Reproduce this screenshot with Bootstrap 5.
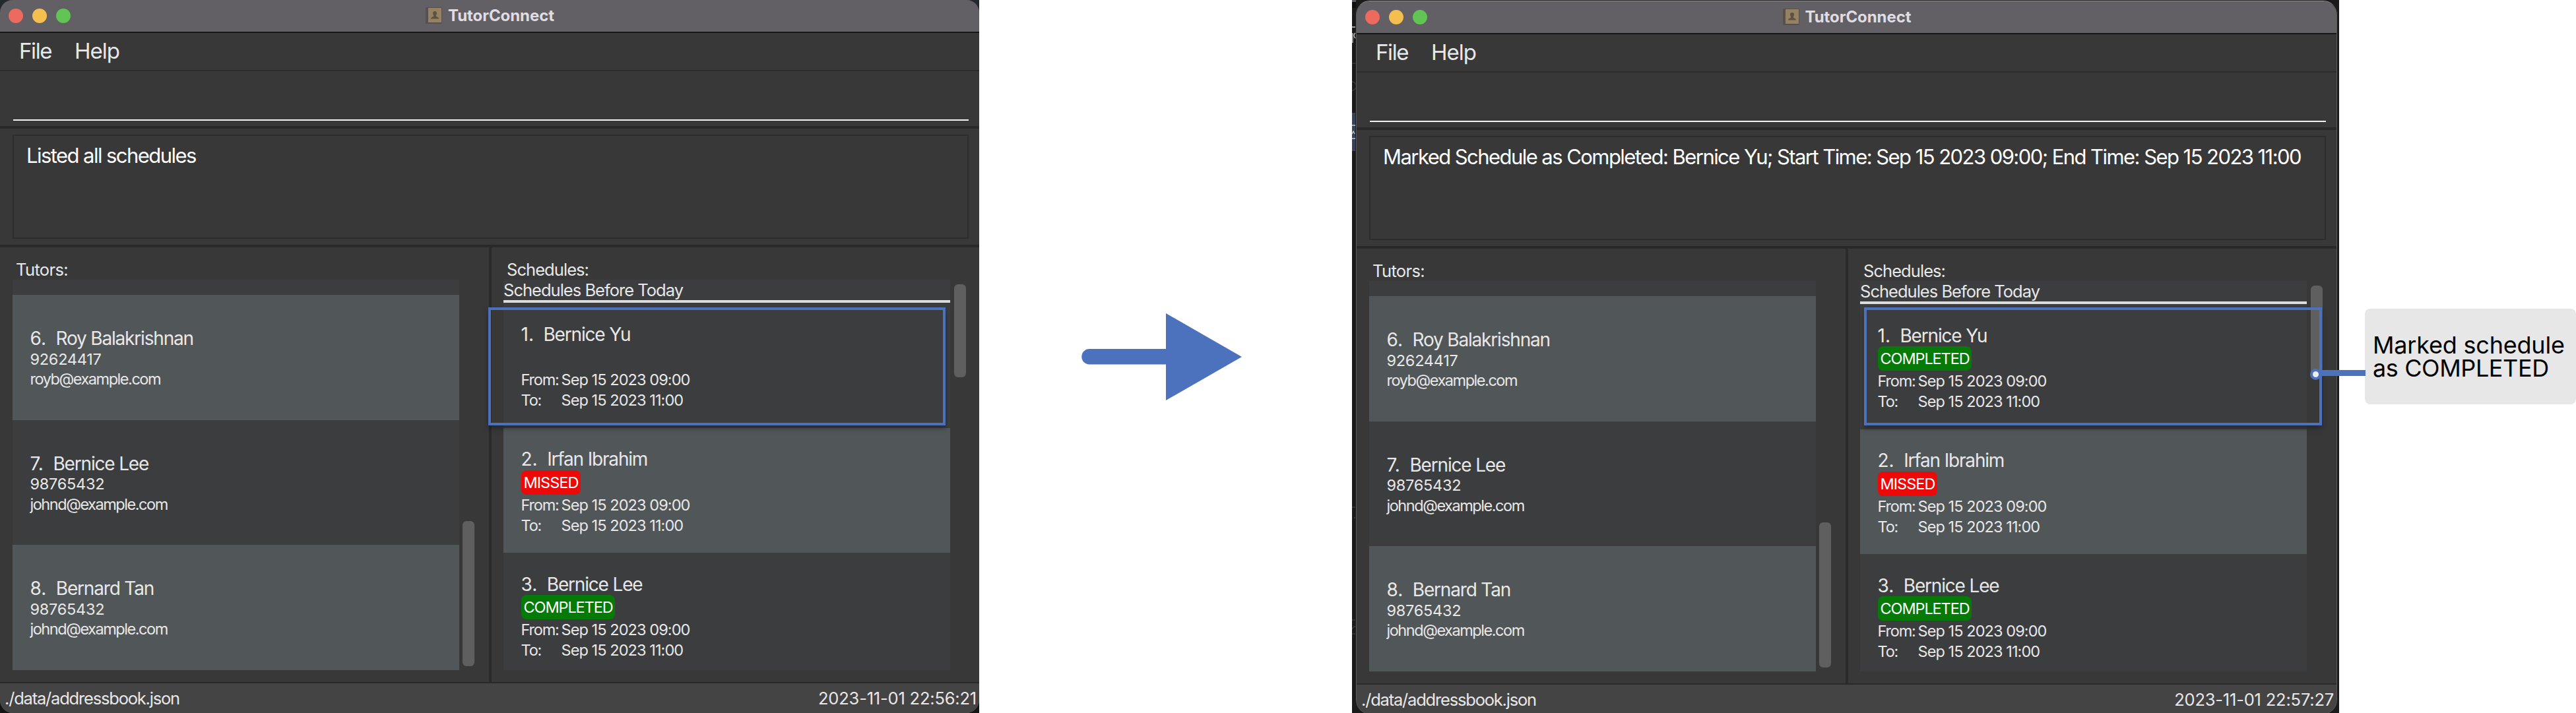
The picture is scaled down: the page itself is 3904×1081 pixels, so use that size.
<!DOCTYPE html>
<html lang="en">
<head>
<meta charset="utf-8">
<title>TutorConnect – marking a schedule</title>
<link href="https://cdn.jsdelivr.net/npm/bootstrap@5.3.0/dist/css/bootstrap.min.css" rel="stylesheet">
<style>
body{margin:0;background:#fff;font-family:Inter,"Liberation Sans",sans-serif;overflow:hidden}
.stage{width:3904px;height:1081px;overflow:hidden}
.shot{background:#1b1b1c;height:1081px;overflow:hidden}
.shot-a{width:1484px;background:linear-gradient(#232a2d 0 50%,#151515 50%)}
.shot-b{width:1496px;padding:1px 3px 0 6px;background:#1b1b1c}
.edge{left:0;top:0}
.win{background:#383838;color:#e8e8e8;overflow:hidden}
.shot-a .win{width:1484px;height:1081px;border-radius:19px 19px 20px 20px;box-shadow:inset 0 -1px #666}
.shot-b .win{width:1487px;height:1082px;border-radius:21px 21px 22px 22px;border:1px solid #5c5c5e;border-top-color:#939096}
.titlebar{height:50px;background:#625f65;border-bottom:2px solid #171718;padding:0 9px 0 13px}
.light{width:22px;height:22px;border-radius:50%}
.lights{gap:14px;width:120px}
.wtitle{font-weight:700;font-size:24px;letter-spacing:-.003em;line-height:30px;color:#dfdde2;gap:9px;margin-right:123px}
.wtitle svg{position:relative;top:-1px}
.menus{height:58px;border-bottom:2px solid #2b2b2b;font-size:33px;gap:35px;padding-left:29px}
.menus span:first-child{letter-spacing:-.043em}
.menus span:last-child{letter-spacing:-.03em}
.cmd{height:87px;border-bottom:4px solid #292929;padding:0 16px 8px 20px}
.cmdline{border-bottom:2px solid #f2f2f2;height:75px}
.result{height:180px;border-bottom:4px solid #292929;padding:9px 16px 9px 19px}
.resbox{height:158px;border:2px solid #2d2d2d;padding:10px 0 0 19px;font-size:31px;line-height:40px;letter-spacing:-.0502em;color:#fff;white-space:nowrap}
.panes{height:659px}
.tutors{width:745px;border-right:4px solid #2b2b2b;padding:18px 0 0 19px}
.scheds{flex:1;padding:18px 0 0 18px}
.ptitle{font-size:25.5px;line-height:31px;letter-spacing:-.037em;padding-left:5px}
.tutors .ptitle{letter-spacing:-.025em}
.rows{height:592px;width:677px;background:#3c3d3f;overflow:hidden}
.peek{height:23px}
.trow,.srow{height:189.6px;padding-left:26.5px;line-height:31px;font-size:23.5px}
.trow{padding-top:48px}
.srow{padding-top:29.5px}
.alt{background:#515658}
.person{font-size:28px;line-height:36px;letter-spacing:-.042em;height:34.5px;white-space:pre}
.person b{font-weight:400;letter-spacing:0;display:inline-block;padding-right:14.5px}
.phone{letter-spacing:-.0117em;line-height:30.5px}
.mail{letter-spacing:-.062em;line-height:30px}
.group{font-size:25.5px;line-height:32px;letter-spacing:-.0386em;border-bottom:4px solid #dcdcdc;height:35px}
.tagrow{height:37px}
.tag{height:37px;line-height:38px;border-radius:8px;padding:0 3px 0 4px;letter-spacing:-.0475em;color:#fff}
.missed{background:#ee0909;letter-spacing:-.041em}
.done{background:#067a06}
.when span:first-child{width:61px;letter-spacing:-.05em}
.when span:last-child{letter-spacing:-.0392em}
.thumbcol{width:18px}
.thumb{background:#5f5f5f;border-radius:6px;width:18px}
.tutors .thumbcol{margin-left:5px;padding-top:365.5px}
.tutors .thumb{height:220px}
.scheds .thumbcol{margin-left:6px;padding-top:7px}
.scheds .thumb{height:141px}
.foot{height:47px;border-top:2px solid #292929;background:#444;font-size:25.5px;padding:1px 4px 0 7px}
.path{letter-spacing:-.0469em}
.clock{letter-spacing:-.0079em}
.arrow{width:565px;height:1081px}
.hilite{border:4px solid #4c72be;box-shadow:0 5px 7px rgba(0,0,0,.3);height:179px;top:466px}
.hilite-a{left:740px;width:693px}
.hilite-b{left:2825px;width:694px}
.link-line{left:3510px;top:561px;width:75px;height:9px;background:#4c72be}
.knob{left:3501px;top:559px;width:17px;height:17px;border-radius:50%;border:4px solid #4c72be;background:#eee}
.note-col{width:359px;padding:468px 0 0 39px}
.note-box{height:145px;border-radius:8px;background:#e7e7e7;color:#000;font-size:36px;line-height:35px;padding:1px 0 0 12px;white-space:nowrap}
.n1{letter-spacing:-.0058em}
.n2{letter-spacing:-.011em}
</style>
<script src="https://cdn.jsdelivr.net/npm/bootstrap@5.3.0/dist/js/bootstrap.bundle.min.js"></script>
</head>
<body>
<main class="stage d-flex position-relative">

  <section class="shot shot-a flex-shrink-0">
    <div class="win d-flex flex-column">
      <header class="titlebar d-flex align-items-center flex-shrink-0">
        <div class="lights d-flex"><i class="light" style="background:#ed6a5e"></i><i class="light" style="background:#f5bf4f"></i><i class="light" style="background:#61c554"></i></div>
        <div class="wtitle d-flex align-items-center justify-content-center flex-grow-1"><svg width="25" height="25" viewBox="0 0 25 25"><rect width="25" height="25" rx="1.5" fill="#57514d"/><rect x="4" y="1" width="20" height="22" fill="#968262"/><path d="M14 6c2.300 0 3.300 1.600 3 3.600-.2 1.500-1.200 2.500-1.200 3.700 0 1.500 4.200 1.200 4.200 4.200H8c0-3 4.200-2.700 4.200-4.200 0-1.200-1-2.200-1.200-3.700C10.700 7.600 11.700 6 14 6z" fill="#5c5244"/></svg><span>TutorConnect</span></div>
      </header>
      <nav class="menus d-flex align-items-center flex-shrink-0"><span>File</span><span>Help</span></nav>
      <div class="cmd flex-shrink-0"><div class="cmdline"></div></div>
      <div class="result flex-shrink-0"><div class="resbox">Listed all schedules</div></div>
      <div class="panes d-flex flex-shrink-0">
        <div class="tutors">
          <div class="ptitle">Tutors:</div>
          <div class="d-flex">
            <div class="rows">
              <div class="peek"></div>
              <div class="trow alt"><div class="person"><b>6.</b>Roy Balakrishnan</div><div class="phone">92624417</div><div class="mail">royb@example.com</div></div>
              <div class="trow"><div class="person"><b>7.</b>Bernice Lee</div><div class="phone">98765432</div><div class="mail">johnd@example.com</div></div>
              <div class="trow alt"><div class="person"><b>8.</b>Bernard Tan</div><div class="phone">98765432</div><div class="mail">johnd@example.com</div></div>
            </div>
            <div class="thumbcol"><div class="thumb"></div></div>
          </div>
        </div>
        <div class="scheds">
          <div class="ptitle">Schedules:</div>
          <div class="d-flex">
            <div class="rows">
              <div class="group">Schedules Before Today</div>
              <div class="srow"><div class="person"><b>1.</b>Bernice Yu</div><div class="tagrow"></div><div class="when d-flex"><span>From:</span><span>Sep 15 2023 09:00</span></div><div class="when d-flex"><span>To:</span><span>Sep 15 2023 11:00</span></div></div>
              <div class="srow alt"><div class="person"><b>2.</b>Irfan Ibrahim</div><div class="tagrow d-flex"><span class="tag missed">MISSED</span></div><div class="when d-flex"><span>From:</span><span>Sep 15 2023 09:00</span></div><div class="when d-flex"><span>To:</span><span>Sep 15 2023 11:00</span></div></div>
              <div class="srow"><div class="person"><b>3.</b>Bernice Lee</div><div class="tagrow d-flex"><span class="tag done">COMPLETED</span></div><div class="when d-flex"><span>From:</span><span>Sep 15 2023 09:00</span></div><div class="when d-flex"><span>To:</span><span>Sep 15 2023 11:00</span></div></div>
            </div>
            <div class="thumbcol"><div class="thumb"></div></div>
          </div>
        </div>
      </div>
      <footer class="foot d-flex align-items-center justify-content-between flex-shrink-0"><span class="path">./data/addressbook.json</span><span class="clock">2023-11-01 22:56:21</span></footer>
    </div>
  </section>

  <div class="arrow flex-shrink-0">
    <svg width="565" height="1081" viewBox="1484 0 565 1081" fill="#4c72be"><path d="M1651 529H1768V552.500H1651A11.750 11.750 0 0 1 1651 529z"/><path d="M1767 475L1882 541L1767 607z"/></svg>
  </div>

  <section class="shot shot-b flex-shrink-0 position-relative">
    <svg class="edge position-absolute" width="6" height="1081" viewBox="0 0 6 1081" fill="none"><path fill="#5d5b60" d="M0 0h6v3H0z"/><path fill="#0f0f13" d="M0 3h6v9H0z"/><path fill="#36415e" d="M0 171h5v58H0z"/><path stroke="#c9c9c9" stroke-width="1.300" d="M0 41h5M5 50q-4 3 0 8M1 50v15M0 190h5M0 203l2-4 2 4M0 210h5"/><path stroke="#4a4a4c" d="M0 96h5M0 124q5 0 5 4M0 137q5 0 5-4M0 769h5M3 785h2M0 940h5M0 954q2-5 5-4M0 961h5"/></svg>
    <div class="win d-flex flex-column">
      <header class="titlebar d-flex align-items-center flex-shrink-0">
        <div class="lights d-flex"><i class="light" style="background:#ed6a5e"></i><i class="light" style="background:#f5bf4f"></i><i class="light" style="background:#61c554"></i></div>
        <div class="wtitle d-flex align-items-center justify-content-center flex-grow-1"><svg width="25" height="25" viewBox="0 0 25 25"><rect width="25" height="25" rx="1.5" fill="#57514d"/><rect x="4" y="1" width="20" height="22" fill="#968262"/><path d="M14 6c2.300 0 3.300 1.600 3 3.600-.2 1.500-1.200 2.500-1.200 3.700 0 1.500 4.200 1.200 4.200 4.200H8c0-3 4.200-2.700 4.200-4.200 0-1.200-1-2.200-1.200-3.700C10.700 7.600 11.700 6 14 6z" fill="#5c5244"/></svg><span>TutorConnect</span></div>
      </header>
      <nav class="menus d-flex align-items-center flex-shrink-0"><span>File</span><span>Help</span></nav>
      <div class="cmd flex-shrink-0"><div class="cmdline"></div></div>
      <div class="result flex-shrink-0"><div class="resbox">Marked Schedule as Completed: Bernice Yu; Start Time: Sep 15 2023 09:00; End Time: Sep 15 2023 11:00</div></div>
      <div class="panes d-flex flex-shrink-0">
        <div class="tutors">
          <div class="ptitle">Tutors:</div>
          <div class="d-flex">
            <div class="rows">
              <div class="peek"></div>
              <div class="trow alt"><div class="person"><b>6.</b>Roy Balakrishnan</div><div class="phone">92624417</div><div class="mail">royb@example.com</div></div>
              <div class="trow"><div class="person"><b>7.</b>Bernice Lee</div><div class="phone">98765432</div><div class="mail">johnd@example.com</div></div>
              <div class="trow alt"><div class="person"><b>8.</b>Bernard Tan</div><div class="phone">98765432</div><div class="mail">johnd@example.com</div></div>
            </div>
            <div class="thumbcol"><div class="thumb"></div></div>
          </div>
        </div>
        <div class="scheds">
          <div class="ptitle">Schedules:</div>
          <div class="d-flex">
            <div class="rows">
              <div class="group">Schedules Before Today</div>
              <div class="srow"><div class="person"><b>1.</b>Bernice Yu</div><div class="tagrow d-flex"><span class="tag done">COMPLETED</span></div><div class="when d-flex"><span>From:</span><span>Sep 15 2023 09:00</span></div><div class="when d-flex"><span>To:</span><span>Sep 15 2023 11:00</span></div></div>
              <div class="srow alt"><div class="person"><b>2.</b>Irfan Ibrahim</div><div class="tagrow d-flex"><span class="tag missed">MISSED</span></div><div class="when d-flex"><span>From:</span><span>Sep 15 2023 09:00</span></div><div class="when d-flex"><span>To:</span><span>Sep 15 2023 11:00</span></div></div>
              <div class="srow"><div class="person"><b>3.</b>Bernice Lee</div><div class="tagrow d-flex"><span class="tag done">COMPLETED</span></div><div class="when d-flex"><span>From:</span><span>Sep 15 2023 09:00</span></div><div class="when d-flex"><span>To:</span><span>Sep 15 2023 11:00</span></div></div>
            </div>
            <div class="thumbcol"><div class="thumb"></div></div>
          </div>
        </div>
      </div>
      <footer class="foot d-flex align-items-center justify-content-between flex-shrink-0"><span class="path">./data/addressbook.json</span><span class="clock">2023-11-01 22:57:27</span></footer>
    </div>
  </section>

  <aside class="note-col flex-shrink-0">
    <div class="note-box d-flex flex-column justify-content-center"><span class="n1">Marked schedule</span><span class="n2">as COMPLETED</span></div>
  </aside>

  <div class="hilite hilite-a position-absolute"></div>
  <div class="hilite hilite-b position-absolute"></div>
  <div class="link-line position-absolute"></div>
  <div class="knob position-absolute"></div>
</main>
</body>
</html>
